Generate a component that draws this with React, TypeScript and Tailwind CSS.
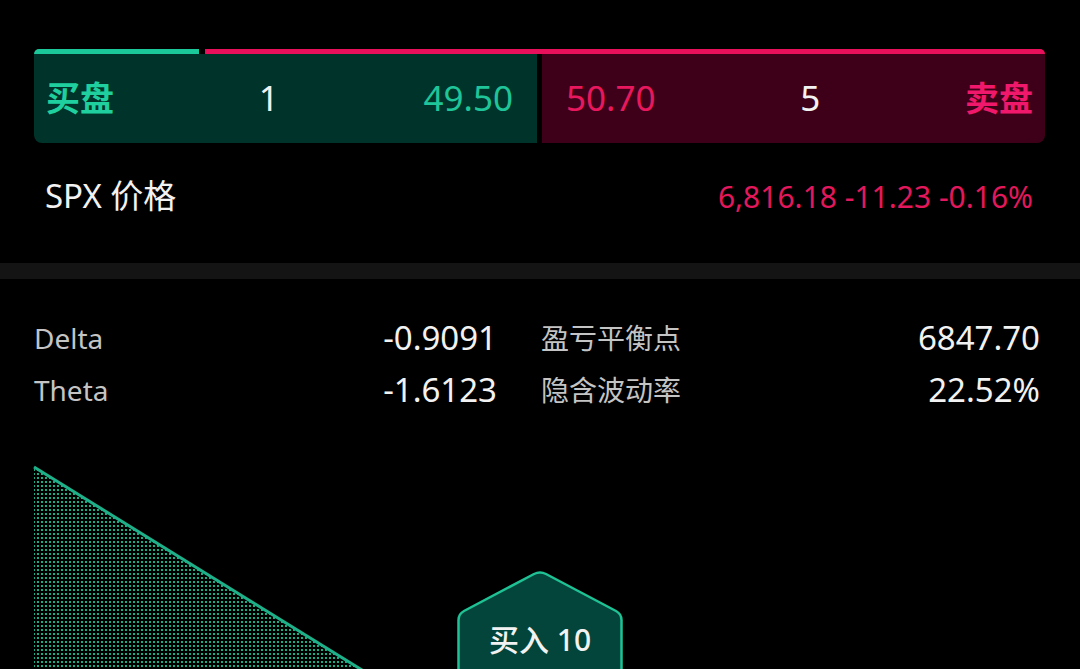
import React from 'react';

const font = { fontFamily: '"Noto Sans", "Noto Sans CJK SC", sans-serif' };

function Greeks() {
  const rows = [
    ['Delta', '-0.9091', '盈亏平衡点', '6847.70'],
    ['Theta', '-1.6123', '隐含波动率', '22.52%'],
  ];
  return (
    <div className="grid grid-cols-[463px_499px] gap-x-[44px] pl-[34px] pt-[33px]">
      {rows.map(([a, b, c, d]) => (
        <React.Fragment key={a}>
          <div className="flex h-[52px] items-center justify-between">
            <span className="text-[28px] text-[#c4c4c4]">{a}</span>
            <span className="text-[33px] text-[#f2f2f2]">{b}</span>
          </div>
          <div className="flex h-[52px] items-center justify-between">
            <span className="text-[28px] text-[#c4c4c4]">{c}</span>
            <span className="text-[33px] text-[#f2f2f2]">{d}</span>
          </div>
        </React.Fragment>
      ))}
    </div>
  );
}

function Chart() {
  return (
    <div className="relative h-[253px] overflow-hidden">
      <svg width="1080" height="253" className="absolute left-0 top-0">
        <defs>
          <pattern id="dots" width="4" height="4" patternUnits="userSpaceOnUse">
            <rect x="1" y="1" width="2" height="2" fill="#1cab82" />
          </pattern>
        </defs>
        <polygon points="34,51 404,280 34,280" fill="url(#dots)" />
        <line x1="34" y1="51" x2="404" y2="280" stroke="#1eb088" strokeWidth="3" />
      </svg>
      <div className="absolute left-[457px] top-[154px] h-[120px] w-[166px]">
        <svg width="166" height="120" className="absolute left-0 top-0">
          <path
            d="M1.5 120 V50 Q1.5 44 7 41 L77 4 Q83 1 89 4 L159 41 Q164.5 44 164.5 50 V120"
            fill="#03453a"
            stroke="#1ec294"
            strokeWidth="2.5"
          />
        </svg>
        <div className="relative flex h-[92px] items-end justify-center text-[30px] font-medium text-[#f2f2f2]">
          买入 10
        </div>
      </div>
    </div>
  );
}

export default function App() {
  return (
    <div style={font} className="h-[669px] w-[1080px] overflow-hidden bg-black">
      <div className="ml-[34px] w-[1011px] pt-[49px]">
        <div className="flex h-[5px] gap-[6px]">
          <div className="w-[165px] rounded-tl-lg bg-[#1bc89a]" />
          <div className="flex-1 rounded-tr-lg bg-[#e8105a]" />
        </div>
        <div className="flex h-[89px] gap-[5px]">
          <div className="flex flex-1 items-center justify-between rounded-bl-lg bg-[#00342a] pl-[12px] pr-[24px]">
            <span className="text-[34px] font-bold text-[#1fcf9d]">买盘</span>
            <span className="text-[35px] text-[#f2f2f2]">1</span>
            <span className="text-[35px] text-[#1fc598]">49.50</span>
          </div>
          <div className="flex flex-1 items-center justify-between rounded-br-lg bg-[#3e0018] pl-[24px] pr-[12px]">
            <span className="text-[35px] text-[#e8185e]">50.70</span>
            <span className="text-[35px] text-[#f2f2f2]">5</span>
            <span className="text-[34px] font-bold text-[#f0186a]">卖盘</span>
          </div>
        </div>
      </div>
      <div className="flex h-[120px] items-center justify-between pb-[14px] pl-[45px] pr-[47px]">
        <span className="text-[33px] text-[#f2f2f2]">SPX 价格</span>
        <span className="text-[30px] text-[#e3185c]">6,816.18 -11.23 -0.16%</span>
      </div>
      <div className="h-[16px] bg-[#141414]" />
      <Greeks />
      <Chart />
    </div>
  );
}
